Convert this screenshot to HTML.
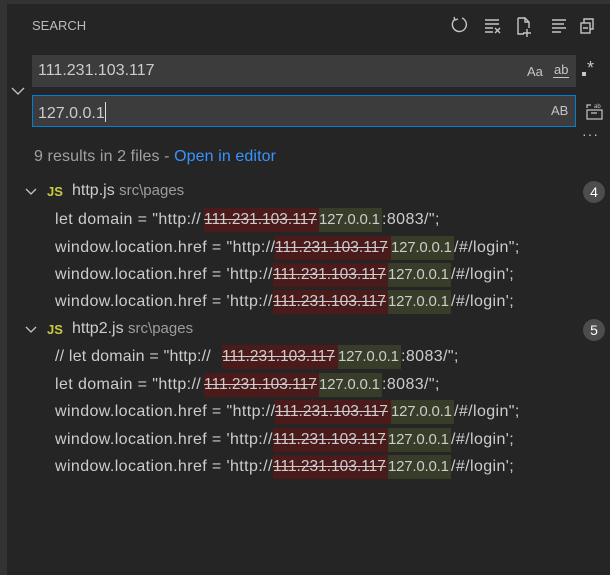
<!DOCTYPE html>
<html><head><meta charset="utf-8"><style>
*{margin:0;padding:0;box-sizing:border-box}
body{width:610px;height:575px;background:#252526;position:relative;overflow:hidden;font-family:"Liberation Sans",sans-serif;color:#cccccc}
.top{position:absolute;left:0;top:0;width:610px;height:4px;background:#333334}
.left{position:absolute;left:0;top:0;width:7px;height:575px;background:#333334}
.a{position:absolute;white-space:nowrap}
.inp{position:absolute;left:32px;width:544px;height:32px;background:#3c3c3c}
.ln{position:absolute;left:55px;height:24px;line-height:24px;font-size:16px;white-space:nowrap;color:#cccccc;letter-spacing:0.4px}
.ln span{display:inline-block;overflow:hidden;vertical-align:top;white-space:nowrap}
.r{background:#4b1b1b;text-decoration:line-through;color:#cccccc;letter-spacing:0;font-size:15.5px}
.g{background:#373d29;letter-spacing:-0.2px;font-size:15px}
.badge{position:absolute;left:583px;width:22px;height:22px;border-radius:11px;background:#4d4d4d;color:#fff;font-size:14px;text-align:center;line-height:22px}
</style></head><body>
<div class="top"></div><div class="left"></div>
<div class="a" style="left:32px;top:18px;font-size:13px;color:#bbbbbb">SEARCH</div>
<svg class="a" style="left:450px;top:15px" width="156" height="22" viewBox="0 0 156 22" fill="none" stroke="#c5c5c5" stroke-width="1.4">
<path d="M5 4 A7 7 0 1 0 12 3"/><path d="M4 2 L5 5 L8 4"/>
<path d="M35 5h14M35 9h14M35 13h8M35 17h8M45 13l5 5M50 13l-5 5"/>
<path d="M68 3h7l4 4v6M68 3v16h6M75 3v4h4M77 14v8M73 18h8"/>
<path d="M102 5h14M102 9h12M102 13h14M102 17h9"/>
<rect x="131" y="8" width="9" height="10"/><path d="M134 8V4h9v10h-3M133 13h5"/>
</svg>
<svg class="a" style="left:11px;top:86px" width="14" height="10"><path d="M1 2l6 6 6-6" fill="none" stroke="#c5c5c5" stroke-width="1.3"/></svg>
<div class="inp" style="top:55px"></div>
<div class="a" style="left:38px;top:62px;font-size:16px;color:#cccccc">111.231.103.117</div>
<div class="a" style="left:527px;top:64px;font-size:13px;color:#c5c5c5">Aa</div>
<div class="a" style="left:553px;top:62px;font-size:13px;color:#c5c5c5;border-bottom:1px solid #c5c5c5;line-height:15px;padding:0 1px">ab</div>
<div class="a" style="left:582px;top:72px;width:4px;height:4px;background:#c5c5c5"></div>
<div class="a" style="left:587px;top:58px;font-size:18px;color:#c5c5c5">*</div>
<div class="inp" style="top:95px;border:1px solid #007fd4"></div>
<div class="a" style="left:38px;top:102px;font-size:16px;color:#cccccc">127.0.0.1<span style="display:inline-block;width:1px;height:20px;background:#ddd;vertical-align:-4px"></span></div>
<div class="a" style="left:551px;top:103px;font-size:13px;color:#c5c5c5">AB</div>
<svg class="a" style="left:585px;top:101px" width="20" height="20" fill="none" stroke="#c5c5c5" stroke-width="1.2"><rect x="2" y="9" width="15" height="9"/><path d="M2 7V4h4M6 12h6" /><text x="9" y="7" font-size="6" fill="#c5c5c5" stroke="none" font-family="Liberation Sans">ab</text></svg>
<div class="a" style="left:582px;top:126px;font-size:14px;color:#c5c5c5;letter-spacing:1px">···</div>
<div class="a" style="left:34px;top:148px;font-size:16px;color:#a0a0a0;letter-spacing:0.1px">9 results in 2 files - <span style="color:#3794ff">Open in editor</span></div>

<svg class="a" style="left:24px;top:187px" width="14" height="10"><path d="M2 2l5 5 5-5" fill="none" stroke="#c5c5c5" stroke-width="1.3"/></svg>
<div class="a" style="left:47px;top:184px;font-size:13px;font-weight:bold;color:#cbcb41">JS</div>
<div class="a" style="left:72px;top:182px;font-size:16px;color:#cccccc">http.js <span style="font-size:15px;color:#9d9d9d">src\pages</span></div>
<div class="badge" style="top:181px">4</div>

<div class="ln" style="top:208px"><span style="width:149px">let domain = "http://</span><span class="r" style="width:115px">111.231.103.117</span><span class="g" style="width:63px">127.0.0.1</span>:8083/";</div>
<div class="ln" style="top:236px"><span style="width:220px">window.location.href = "http://</span><span class="r" style="width:116px">111.231.103.117</span><span class="g" style="width:63px">127.0.0.1</span>/#/login";</div>
<div class="ln" style="top:263px"><span style="width:218px">window.location.href = 'http://</span><span class="r" style="width:115px">111.231.103.117</span><span class="g" style="width:63px">127.0.0.1</span>/#/login';</div>
<div class="ln" style="top:290px"><span style="width:218px">window.location.href = 'http://</span><span class="r" style="width:115px">111.231.103.117</span><span class="g" style="width:63px">127.0.0.1</span>/#/login';</div>

<svg class="a" style="left:24px;top:325px" width="14" height="10"><path d="M2 2l5 5 5-5" fill="none" stroke="#c5c5c5" stroke-width="1.3"/></svg>
<div class="a" style="left:47px;top:322px;font-size:13px;font-weight:bold;color:#cbcb41">JS</div>
<div class="a" style="left:72px;top:320px;font-size:16px;color:#cccccc">http2.js <span style="font-size:15px;color:#9d9d9d">src\pages</span></div>
<div class="badge" style="top:319px">5</div>

<div class="ln" style="top:345px"><span style="width:167px;letter-spacing:0.2px">// let domain = "http://</span><span class="r" style="width:116px">111.231.103.117</span><span class="g" style="width:63px">127.0.0.1</span>:8083/";</div>
<div class="ln" style="top:373px"><span style="width:149px">let domain = "http://</span><span class="r" style="width:115px">111.231.103.117</span><span class="g" style="width:63px">127.0.0.1</span>:8083/";</div>
<div class="ln" style="top:400px"><span style="width:220px">window.location.href = "http://</span><span class="r" style="width:116px">111.231.103.117</span><span class="g" style="width:63px">127.0.0.1</span>/#/login";</div>
<div class="ln" style="top:428px"><span style="width:218px">window.location.href = 'http://</span><span class="r" style="width:115px">111.231.103.117</span><span class="g" style="width:63px">127.0.0.1</span>/#/login';</div>
<div class="ln" style="top:455px"><span style="width:218px">window.location.href = 'http://</span><span class="r" style="width:115px">111.231.103.117</span><span class="g" style="width:63px">127.0.0.1</span>/#/login';</div>
</body></html>
